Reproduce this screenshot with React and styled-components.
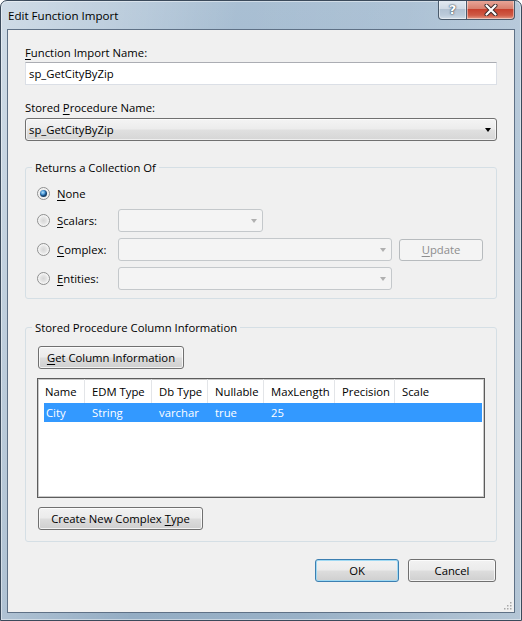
import React from 'react';
import styled, { createGlobalStyle } from 'styled-components';

const GlobalStyle = createGlobalStyle`
  html, body { margin: 0; padding: 0; background: #fff; }
  body {
    font-family: "Segoe UI", "Open Sans", "Noto Sans", sans-serif;
    font-size: 11.3px;
    line-height: 15px;
    color: #000;
  }
  u { text-decoration-thickness: 1px; text-underline-offset: 2px; }
`;

const Window = styled.div`
  box-sizing: border-box;
  width: 522px;
  height: 621px;
  display: flex;
  flex-direction: column;
  border: 1px solid #3b4a5b;
  border-radius: 7px 7px 0 0;
  overflow: hidden;
  background:
    linear-gradient(100deg, rgba(255,255,255,0.45) 0%, rgba(255,255,255,0.25) 18%, rgba(255,255,255,0) 38%, rgba(255,255,255,0.05) 65%, rgba(255,255,255,0.3) 100%),
    linear-gradient(180deg, #a9bfd3 0%, #9bb3c9 60%, #94adc4 100%);
  box-shadow: inset 0 0 0 1px rgba(255,255,255,0.45);
`;

const TitleBar = styled.div`
  height: 28px;
  display: flex;
  align-items: flex-start;
  flex-shrink: 0;
`;

const Title = styled.div`
  margin: 7px 0 0 7px;
  font-size: 11.6px;
  color: #000;
`;

const CaptionButtons = styled.div`
  margin: -1px 6px 0 auto;
  display: flex;
`;

const CaptionButton = styled.div`
  box-sizing: border-box;
  width: ${p => p.$width}px;
  height: 20px;
  display: flex;
  align-items: center;
  justify-content: center;
  border: 1px solid #4a5a6b;
  border-top: none;
  border-left-width: ${p => (p.$close ? 0 : 1)}px;
  border-radius: ${p => (p.$close ? '0 0 4px 0' : '0 0 0 4px')};
  background: ${p =>
    p.$close
      ? 'linear-gradient(180deg, #e9a99c 0%, #d8816f 45%, #c7412e 50%, #cf5a45 80%, #e59a86 100%)'
      : 'linear-gradient(180deg, #e4ebf2 0%, #cfdae5 45%, #b2c2d2 50%, #bccbda 80%, #d2dde8 100%)'};
  box-shadow: inset 0 0 0 1px rgba(255,255,255,0.45);
  color: #fff;
  font-family: "DejaVu Sans", sans-serif;
  font-weight: bold;
  font-size: 13px;
  text-shadow: 0 0 1px #2a3a4a, 0 0 2px #2a3a4a;
`;

const Client = styled.div`
  flex: 1;
  position: relative;
  margin: 0 6px 7px 6px;
  padding: 15px 17px 0 17px;
  display: flex;
  flex-direction: column;
  border: 1px solid #5f7186;
  background: #f0f0f0;
`;

const Label = styled.div`
  margin-top: ${p => p.$top || 0}px;
`;

const TextBox = styled.div`
  box-sizing: border-box;
  height: 23px;
  margin-top: 2px;
  padding: 0 3px;
  display: flex;
  align-items: center;
  background: #fff;
  border: 1px solid #dbdfe6;
  border-top-color: #abadb3;
`;

const Combo = styled.div`
  box-sizing: border-box;
  height: 23px;
  width: ${p => (p.$width ? `${p.$width}px` : '100%')};
  margin-top: ${p => p.$top || 0}px;
  flex-shrink: 0;
  display: flex;
  align-items: center;
  padding: 0 5px 0 3px;
  border: 1px solid ${p => (p.$disabled ? '#c4c8cb' : '#707070')};
  border-radius: 3px;
  background: ${p =>
    p.$disabled
      ? '#f4f4f4'
      : 'linear-gradient(180deg, #f4f4f4 0%, #ececec 48%, #e0e0e0 52%, #d6d6d6 100%)'};
  box-shadow: ${p => (p.$disabled ? 'none' : 'inset 0 0 0 1px rgba(255,255,255,0.6)')};
`;

const Arrow = styled.span`
  margin-left: auto;
  width: 0;
  height: 0;
  border-left: 3.5px solid transparent;
  border-right: 3.5px solid transparent;
  border-top: 4px solid ${p => (p.$disabled ? '#b0b0b0' : '#000')};
`;

const Group = styled.fieldset`
  margin: ${p => p.$top}px 0 0 0;
  padding: ${p => p.$pad};
  min-width: 0;
  border: 1px solid #d5dfe5;
  border-radius: 3px;
  display: flex;
  flex-direction: column;
`;

const Legend = styled.legend`
  margin-left: -5px;
  padding: 0 3px;
`;

const OptionList = styled.div`
  display: flex;
  flex-direction: column;
  gap: 6px;
`;

const OptionRow = styled.div`
  height: ${p => p.$height}px;
  display: flex;
  align-items: center;
`;

const Radio = styled.span`
  box-sizing: border-box;
  width: 13px;
  height: 13px;
  flex-shrink: 0;
  border-radius: 50%;
  border: 1px solid #8e8f8f;
  background: radial-gradient(circle at 50% 50%, #d6d6d6 0, #e4e4e4 3px, #f4f4f4 5px, #fbfbfb 6px);
  display: flex;
  align-items: center;
  justify-content: center;
  &::after {
    content: '';
    display: ${p => (p.$checked ? 'block' : 'none')};
    width: 7px;
    height: 7px;
    border-radius: 50%;
    background: radial-gradient(circle at 40% 35%, #b8e2fb 0, #4d9ad8 2px, #1f5b93 3px, #173f66 4px);
  }
`;

const RadioLabel = styled.span`
  width: 61px;
  margin-left: 7px;
  flex-shrink: 0;
`;

const Button = styled.button`
  box-sizing: border-box;
  width: ${p => p.$width}px;
  height: ${p => p.$height || 23}px;
  margin: ${p => p.$margin || 0};
  padding: 0;
  flex-shrink: 0;
  font: inherit;
  color: ${p => (p.disabled ? '#8d8d8d' : '#000')};
  border-radius: 3px;
  border: 1px solid ${p => (p.disabled ? '#b7bbbe' : p.$default ? '#3c7fb1' : '#707070')};
  background: ${p =>
    p.disabled
      ? '#f4f4f4'
      : 'linear-gradient(180deg, #f2f2f2 0%, #ebebeb 48%, #dddddd 52%, #cfcfcf 100%)'};
  box-shadow: ${p =>
    p.disabled ? 'none' : p.$default ? 'inset 0 0 0 1px #9fd9f3' : 'inset 0 0 0 1px rgba(255,255,255,0.75)'};
`;

const ListView = styled.div`
  box-sizing: border-box;
  height: 120px;
  margin-top: 9px;
  border: 1px solid #5c5c5c;
  box-shadow: inset 0 0 0 1px #c9c9c9;
  background: #fff;
  display: flex;
  flex-direction: column;
`;

const HeaderRow = styled.div`
  height: 24px;
  display: flex;
  align-items: center;
`;

const HeaderCell = styled.div`
  box-sizing: border-box;
  width: ${p => p.$width}px;
  height: 100%;
  padding-left: 7px;
  display: flex;
  align-items: center;
  border-right: 1px solid ${p => (p.$last ? 'transparent' : '#e3e5e8')};
`;

const DataRow = styled.div`
  height: 19px;
  margin: 0 2px 0 6px;
  display: flex;
  align-items: center;
  background: ${p => (p.$selected ? '#3399ff' : 'transparent')};
  color: ${p => (p.$selected ? '#fff' : '#000')};
`;

const DataCell = styled.div`
  box-sizing: border-box;
  width: ${p => p.$width}px;
  padding-left: ${p => (p.$first ? 2 : 7)}px;
`;

const Footer = styled.div`
  margin-top: 17px;
  margin-right: 1px;
  display: flex;
  justify-content: flex-end;
  gap: 9px;
`;

const Grip = styled.svg`
  position: absolute;
  right: 2px;
  bottom: 2px;
`;

const columns = [
  { name: 'Name', width: 47 },
  { name: 'EDM Type', width: 67 },
  { name: 'Db Type', width: 56 },
  { name: 'Nullable', width: 56 },
  { name: 'MaxLength', width: 71 },
  { name: 'Precision', width: 60 },
  { name: 'Scale', width: 60 },
];

const rows = [['City', 'String', 'varchar', 'true', '25', '', '']];

export default function App() {
  return (
    <>
      <GlobalStyle />
      <Window>
        <TitleBar>
          <Title>Edit Function Import</Title>
          <CaptionButtons>
            <CaptionButton $width={29}>?</CaptionButton>
            <CaptionButton $width={48} $close>
              <svg width="14" height="12" viewBox="0 0 14 12">
                <path d="M2.5 1.5 L11.5 10.5 M11.5 1.5 L2.5 10.5" stroke="#3a2a2a" strokeWidth="4" strokeLinecap="round" />
                <path d="M2.5 1.5 L11.5 10.5 M11.5 1.5 L2.5 10.5" stroke="#fff" strokeWidth="2.2" strokeLinecap="round" />
              </svg>
            </CaptionButton>
          </CaptionButtons>
        </TitleBar>
        <Client>
          <Label><u>F</u>unction Import Name:</Label>
          <TextBox>sp_GetCityByZip</TextBox>
          <Label $top={15}>Stored <u>P</u>rocedure Name:</Label>
          <Combo $top={3}>
            sp_GetCityByZip
            <Arrow />
          </Combo>

          <Group $top={19} $pad="8px 10px 8px 11px">
            <Legend>Returns a Collection Of</Legend>
            <OptionList>
              <OptionRow $height={20}>
                <Radio $checked />
                <RadioLabel><u>N</u>one</RadioLabel>
              </OptionRow>
              <OptionRow $height={23}>
                <Radio />
                <RadioLabel><u>S</u>calars:</RadioLabel>
                <Combo $width={145} $disabled><Arrow $disabled /></Combo>
              </OptionRow>
              <OptionRow $height={23}>
                <Radio />
                <RadioLabel><u>C</u>omplex:</RadioLabel>
                <Combo $width={274} $disabled><Arrow $disabled /></Combo>
                <Button disabled $width={84} $height={22} $margin="0 0 0 7px"><u>U</u>pdate</Button>
              </OptionRow>
              <OptionRow $height={23}>
                <Radio />
                <RadioLabel><u>E</u>ntities:</RadioLabel>
                <Combo $width={274} $disabled><Arrow $disabled /></Combo>
              </OptionRow>
            </OptionList>
          </Group>

          <Group $top={21} $pad="11px 11px 11px 11px">
            <Legend>Stored Procedure Column Information</Legend>
            <Button $width={146} $margin="0 0 0 1px"><u>G</u>et Column Information</Button>
            <ListView>
              <HeaderRow>
                {columns.map((c, i) => (
                  <HeaderCell key={c.name} $width={c.width} $last={i === columns.length - 1}>{c.name}</HeaderCell>
                ))}
              </HeaderRow>
              {rows.map((r, i) => (
                <DataRow key={i} $selected>
                  {r.map((v, j) => (
                    <DataCell key={j} $first={j === 0} $width={j === 0 ? columns[j].width - 6 : columns[j].width}>
                      {v}
                    </DataCell>
                  ))}
                </DataRow>
              ))}
            </ListView>
            <Button $width={165} $margin="9px 0 0 1px">Create New Complex <u>T</u>ype</Button>
          </Group>

          <Footer>
            <Button $width={84} $default>OK</Button>
            <Button $width={88}>Cancel</Button>
          </Footer>

          <Grip width="10" height="10" viewBox="0 0 10 10">
            {[[8, 2], [8, 5], [5, 5], [8, 8], [5, 8], [2, 8]].map(([x, y]) => (
              <rect key={`${x}-${y}`} x={x} y={y} width="1.5" height="1.5" fill="#a8a8a8" />
            ))}
          </Grip>
        </Client>
      </Window>
    </>
  );
}
